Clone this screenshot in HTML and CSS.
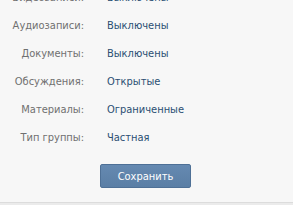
FILE: index.html
```html
<!DOCTYPE html>
<html lang="ru">
<head>
  <meta charset="UTF-8" />
  <title>Настройки группы</title>
  <link rel="stylesheet" href="styles.css">
</head>
<body>
  <div class="settings">
    <div class="rows">
      <div class="label">Видеозаписи:</div><div class="value">Выключены</div>
      <div class="label">Аудиозаписи:</div><div class="value">Выключены</div>
      <div class="label">Документы:</div><div class="value">Выключены</div>
      <div class="label">Обсуждения:</div><div class="value">Открытые</div>
      <div class="label">Материалы:</div><div class="value">Ограниченные</div>
      <div class="label">Тип группы:</div><div class="value">Частная</div>
    </div>
    <div class="actions">
      <button class="save-button">Сохранить</button>
    </div>
  </div>
  <div class="footer-line"></div>
</body>
</html>
```

FILE: styles.css
```css
body {
  margin: 0;
  background: #f7f7f7;
  font-family: "DejaVu Sans Condensed", "DejaVu Sans", sans-serif;
  font-size: 11px;
  overflow: hidden;
}

.settings {
  margin-top: -17px;
  height: 219px;
}

.rows {
  display: grid;
  grid-template-columns: 84px auto;
  column-gap: 23px;
  grid-auto-rows: 28px;
  align-items: center;
}

.label {
  text-align: right;
  color: #707070;
}

.value {
  color: #2b4f73;
}

.actions {
  padding-left: 100px;
  margin-top: 13px;
}

.save-button {
  width: 91px;
  height: 24px;
  font-family: inherit;
  font-size: 11px;
  color: #fff;
  background: linear-gradient(to bottom, #6589b1, #5a7ea5);
  border: 1px solid #4e7096;
  border-radius: 2px;
  cursor: pointer;
}

.footer-line {
  border-top: 1px solid #dcdcdc;
  background: #ebebeb;
  height: 10px;
}
```
